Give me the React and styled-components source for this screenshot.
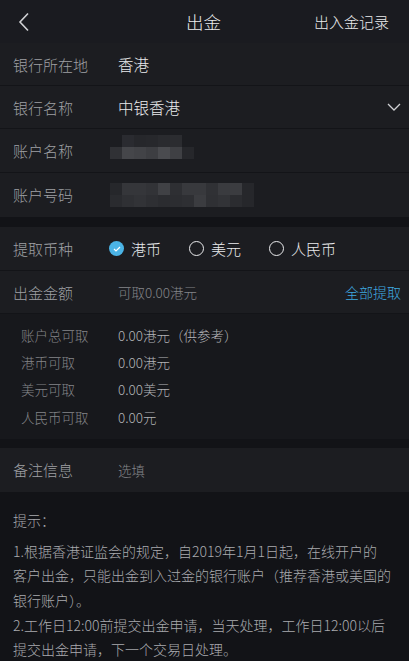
import React, { useState } from "react";
import styled, { createGlobalStyle } from "styled-components";

const GlobalStyle = createGlobalStyle`
  html, body {
    margin: 0;
    padding: 0;
    background: #121317;
  }
  body {
    font-family: "Noto Sans CJK SC", "Noto Sans", sans-serif;
    font-weight: 300;
    -webkit-font-smoothing: antialiased;
  }
`;

const colors = {
  header: "#1a1b20",
  row: "#1c1d21",
  sub: "#17181c",
  line: "#131418",
  label: "#9fa0a4",
  value: "#eaebed",
  muted: "#848589",
  subValue: "#b3b4b8",
  blue: "#3fa9e0",
};

const Page = styled.div`
  width: 409px;
  min-height: 661px;
  background: #121317;
  overflow: hidden;
`;

const Header = styled.div`
  height: 43px;
  display: grid;
  grid-template-columns: 1fr auto 1fr;
  align-items: center;
  background: ${colors.header};
  padding: 0 20px 0 18px;
`;

const BackButton = styled.div`
  display: flex;
  align-items: center;
`;

const Title = styled.div`
  color: ${colors.value};
  font-size: 17.5px;
`;

const RecordLink = styled.div`
  justify-self: end;
  color: ${colors.value};
  font-size: 15px;
`;

const Section = styled.div`
  background: ${colors.row};
  margin-bottom: ${(p) => p.gap || 0}px;
`;

const Row = styled.div`
  display: flex;
  align-items: center;
  padding: 0 8px 0 13px;
  border-bottom: 1px solid ${(p) => (p.last ? "transparent" : colors.line)};
  box-sizing: border-box;
  height: ${(p) => p.h || 43}px;
`;

const Label = styled.div`
  width: 105px;
  flex-shrink: 0;
  color: ${colors.label};
  font-size: 15px;
`;

const Value = styled.div`
  flex: 1;
  color: ${(p) => (p.muted ? colors.muted : colors.value)};
  font-size: ${(p) => (p.small ? 13.5 : 15.5)}px;
`;

const Mosaic = styled.div`
  align-self: flex-start;
  margin-top: ${(p) => p.top}px;
  margin-left: -8px;
  display: grid;
  grid-template-columns: repeat(${(p) => p.cols}, 12px);
  grid-auto-rows: 12px;
`;

const MosaicCell = styled.div``;

const Action = styled.div`
  color: ${colors.blue};
  font-size: 14px;
`;

const Radios = styled.div`
  display: flex;
  align-items: center;
  gap: 28px;
  margin-left: -9px;
`;

const RadioItem = styled.div`
  display: flex;
  align-items: center;
  gap: 7px;
  color: ${colors.value};
  font-size: 15px;
  cursor: pointer;
`;

const RadioCircle = styled.span`
  width: 15px;
  height: 15px;
  border-radius: 50%;
  box-sizing: border-box;
  display: flex;
  align-items: center;
  justify-content: center;
  border: ${(p) => (p.on ? "none" : `1.3px solid ${colors.value}`)};
  background: ${(p) => (p.on ? "#4bb4e6" : "transparent")};
`;

const SubList = styled.div`
  background: ${colors.sub};
  padding: 7px 0 9px 21px;
  margin-bottom: 9px;
`;

const SubRow = styled.div`
  display: flex;
  align-items: center;
  height: 27.3px;
`;

const SubLabel = styled.div`
  width: 97px;
  color: ${colors.muted};
  font-size: 13.5px;
`;

const SubValue = styled.div`
  color: ${colors.subValue};
  font-size: 13.5px;
`;

const Tips = styled.div`
  background: #121317;
  padding: 16px 13px 0;
  color: #a9aaae;
  font-size: 14px;
  line-height: 24.6px;
`;

const TipsTitle = styled.div`
  margin-bottom: 6px;
`;

const TipLine = styled.div`
  white-space: nowrap;
`;

const Chevron = ({ dir = "left", color = "#d0d1d4" }) =>
  dir === "left" ? (
    <svg width="12" height="20" viewBox="0 0 12 20">
      <path d="M10 1.5 L2 10 L10 18.5" fill="none" stroke={color} strokeWidth="1.6" />
    </svg>
  ) : (
    <svg width="14" height="8" viewBox="0 0 14 8">
      <path d="M1 1 L7 7 L13 1" fill="none" stroke={color} strokeWidth="1.3" />
    </svg>
  );

const nameMosaic = [
  [null, "#2a2b30", "#26272b", "#27282c", "#2a2b2f", "#2b2c30", null],
  ["#303135", "#45464a", "#424347", "#3d3e42", "#4a4b4f", "#3f4044", "#26272b"],
];

const numberMosaic = [
  ["#26272b", "#35363a", "#35363a", "#323337", "#404145", "#2e2f33", "#38393d", "#38393d", "#303135", "#3a3b3f", "#3b3c40", "#26272b"],
  ["#2a2b2f", "#2f3034", "#323337", "#2e2f33", "#2b2c30", "#2c2d31", "#2e2f33", "#3b3c40", "#2f3034", "#323337", "#2b2c30", "#26272b"],
];

const MosaicBlock = ({ data, top }) => (
  <Mosaic cols={data[0].length} top={top}>
    {data.flat().map((c, i) => (
      <MosaicCell key={i} style={{ background: c || "transparent" }} />
    ))}
  </Mosaic>
);

const currencies = ["港币", "美元", "人民币"];

const available = [
  ["账户总可取", "0.00港元（供参考）"],
  ["港币可取", "0.00港元"],
  ["美元可取", "0.00美元"],
  ["人民币可取", "0.00元"],
];

const tipLines = [
  "1.根据香港证监会的规定，自2019年1月1日起，在线开户的",
  "客户出金，只能出金到入过金的银行账户（推荐香港或美国的",
  "银行账户）。",
  "2.工作日12:00前提交出金申请，当天处理，工作日12:00以后",
  "提交出金申请，下一个交易日处理。",
];

export default function App() {
  const [currency, setCurrency] = useState("港币");

  return (
    <Page>
      <GlobalStyle />
      <Header>
        <BackButton>
          <Chevron dir="left" />
        </BackButton>
        <Title>出金</Title>
        <RecordLink>出入金记录</RecordLink>
      </Header>

      <Section gap={10}>
        <Row>
          <Label>银行所在地</Label>
          <Value>香港</Value>
        </Row>
        <Row>
          <Label>银行名称</Label>
          <Value>中银香港</Value>
          <Chevron dir="down" />
        </Row>
        <Row h={44}>
          <Label>账户名称</Label>
          <MosaicBlock data={nameMosaic} top={6} />
        </Row>
        <Row h={44} last>
          <Label>账户号码</Label>
          <MosaicBlock data={numberMosaic} top={10} />
        </Row>
      </Section>

      <Section>
        <Row h={44}>
          <Label>提取币种</Label>
          <Radios>
            {currencies.map((c) => (
              <RadioItem key={c} onClick={() => setCurrency(c)}>
                <RadioCircle on={currency === c ? 1 : 0}>
                  {currency === c && (
                    <svg width="8" height="6" viewBox="0 0 8 6">
                      <path d="M1 3 L3 5 L7 1" fill="none" stroke="#fff" strokeWidth="1.2" />
                    </svg>
                  )}
                </RadioCircle>
                {c}
              </RadioItem>
            ))}
          </Radios>
        </Row>
        <Row>
          <Label>出金金额</Label>
          <Value muted small>可取0.00港元</Value>
          <Action>全部提取</Action>
        </Row>
      </Section>

      <SubList>
        {available.map(([k, v]) => (
          <SubRow key={k}>
            <SubLabel>{k}</SubLabel>
            <SubValue>{v}</SubValue>
          </SubRow>
        ))}
      </SubList>

      <Section>
        <Row h={44} last>
          <Label>备注信息</Label>
          <Value muted small>选填</Value>
        </Row>
      </Section>

      <Tips>
        <TipsTitle>提示：</TipsTitle>
        {tipLines.map((l) => (
          <TipLine key={l}>{l}</TipLine>
        ))}
      </Tips>
    </Page>
  );
}
